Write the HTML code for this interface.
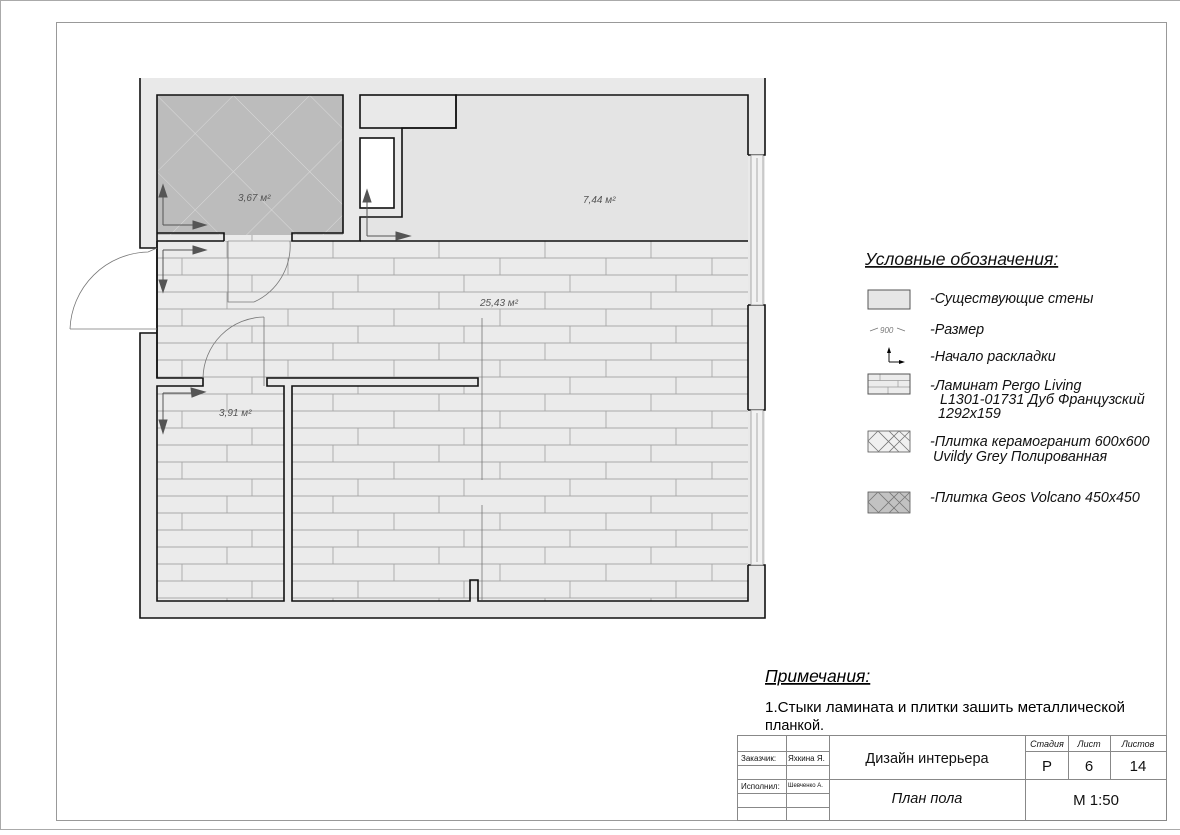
<!DOCTYPE html>
<html><head><meta charset="utf-8"><style>
html,body{margin:0;padding:0;background:#fff;}
svg{display:block;}
text{font-family:"Liberation Sans","DejaVu Sans",sans-serif;}
</style></head><body>
<svg width="1180" height="835" viewBox="0 0 1180 835" xmlns="http://www.w3.org/2000/svg">
<defs>
<pattern id="lam" x="157" y="241" width="318" height="51" patternUnits="userSpaceOnUse">
<rect width="318" height="51" fill="#ebebeb"/>
<g stroke="#a8a8a8" stroke-width="0.9" fill="none">
<line x1="0" y1="17" x2="318" y2="17"/><line x1="0" y1="34" x2="318" y2="34"/><line x1="0" y1="51" x2="318" y2="51"/><line x1="0" y1="0" x2="318" y2="0"/>
<line x1="70" y1="0" x2="70" y2="17"/><line x1="176" y1="0" x2="176" y2="17"/><line x1="282" y1="0" x2="282" y2="17"/>
<line x1="25" y1="17" x2="25" y2="34"/><line x1="131" y1="17" x2="131" y2="34"/><line x1="237" y1="17" x2="237" y2="34"/>
<line x1="95" y1="34" x2="95" y2="51"/><line x1="201" y1="34" x2="201" y2="51"/><line x1="307" y1="34" x2="307" y2="51"/>
</g></pattern>
<pattern id="tile" x="157" y="95" width="54" height="54" patternUnits="userSpaceOnUse" patternTransform="rotate(45 157 95)">
<rect width="54" height="54" fill="#bcbcbc"/>
<path d="M0 0H54M0 0V54" stroke="#dadada" stroke-width="1"/>
</pattern>
<pattern id="lamS" x="868" y="374" width="42" height="20" patternUnits="userSpaceOnUse">
<rect width="42" height="20" fill="#ececec"/>
<g stroke="#999" stroke-width="0.7"><line x1="0" y1="6.5" x2="42" y2="6.5"/><line x1="0" y1="13" x2="42" y2="13"/>
<line x1="12" y1="0" x2="12" y2="6.5"/><line x1="30" y1="6.5" x2="30" y2="13"/><line x1="20" y1="13" x2="20" y2="20"/></g>
</pattern>
</defs>
<rect x="0.5" y="0.5" width="1185" height="829" fill="none" stroke="#aaa"/>
<rect x="56.5" y="22.5" width="1110" height="798" fill="none" stroke="#999"/>

<rect x="140" y="78" width="625" height="540" fill="#e9e9e9"/>
<rect x="139" y="248" width="17" height="84" fill="#fff"/>
<g stroke="#111" stroke-width="1.6" fill="none">
<polyline points="140,78 140,248 157,248"/>
<polyline points="157,333 140,333 140,618 765,618 765,565 748,565"/>
<polyline points="748,410 765,410 765,305 748,305"/>
<polyline points="748,155 765,155 765,78"/>
</g>
<g stroke="#999" stroke-width="0.8" fill="#f2f2f2">
<rect x="751" y="155" width="12" height="150"/><rect x="751" y="410" width="12" height="155"/>
<line x1="757" y1="158" x2="757" y2="302"/><line x1="757" y1="413" x2="757" y2="562"/>
</g>

<rect x="157" y="241" width="591" height="137" fill="url(#lam)"/>
<rect x="228" y="233" width="64" height="9" fill="url(#lam)"/>
<rect x="157" y="386" width="127" height="215" fill="url(#lam)"/>
<rect x="292" y="386" width="456" height="215" fill="url(#lam)"/>
<rect x="203" y="377" width="64" height="10" fill="url(#lam)"/>
<rect x="478" y="377" width="270" height="10" fill="url(#lam)"/>
<rect x="284" y="386" width="8" height="215" fill="#e9e9e9"/>
<rect x="157" y="95" width="186" height="140" fill="url(#tile)"/>
<path d="M456 95H748V241H360V217H402V128H456Z" fill="#e4e4e4"/>
<rect x="360" y="95" width="96" height="33" fill="#e9e9e9"/>
<rect x="360" y="138" width="34" height="70" fill="#fff"/>

<g stroke="#111" stroke-width="1.6" fill="none">
<polyline points="157,248 157,95 343,95 343,233 292,233 292,241 360,241 360,217 402,217 402,128 456,128 456,95 748,95 748,155"/>
<polyline points="224,241 224,233 157,233"/>
<rect x="360" y="95" width="96" height="33"/>
<rect x="360" y="138" width="34" height="70"/>
<line x1="157" y1="241" x2="224" y2="241"/>
<polyline points="157,241 157,378 203,378 203,386 157,386 157,601 284,601 284,386 267,386 267,378 478,378 478,386 292,386 292,601 470,601 470,580 478,580 478,601 748,601 748,565"/>
<line x1="748" y1="305" x2="748" y2="410"/>
<line x1="157" y1="248" x2="157" y2="378"/>
</g>
<line x1="360" y1="241" x2="748" y2="241" stroke="#111" stroke-width="1.4"/>
<g stroke="#777" stroke-width="0.8" fill="none">
<line x1="482" y1="318" x2="482" y2="480"/><line x1="482" y1="505" x2="482" y2="600"/>
<path d="M228 241V302H254"/>
<path d="M254 302A62 62 0 0 0 290 241"/>
<path d="M264 386V317"/>
<path d="M264 317A62 62 0 0 0 203 378"/>
<path d="M70 329H157"/>
<path d="M70 329A80 80 0 0 1 148 252L157 248"/>
</g>
<g stroke="#555" stroke-width="1" fill="#555">
<path d="M163 225V195M163 225H195" fill="none"/><path d="M159 197L163 185L167 197Z"/><path d="M193 221L206 225L193 229Z"/>
<path d="M367 236V200M367 236H398" fill="none"/><path d="M363 202L367 190L371 202Z"/><path d="M396 232L410 236L396 240Z"/>
<path d="M163 250H195M163 250V280" fill="none"/><path d="M193 246L206 250L193 254Z"/><path d="M159 280L163 292L167 280Z"/>
<path d="M163 393H195M163 393V420" fill="none"/><path d="M191 388L205 392L192 397Z"/><path d="M159 420L163 433L167 420Z"/>
</g>
<g fill="#555" font-size="10">
<text x="238" y="201" font-style="italic">3,67 м²</text>
<text x="583" y="203" font-style="italic">7,44 м²</text>
<text x="480" y="306" font-style="italic">25,43 м²</text>
<text x="219" y="416" font-style="italic">3,91 м²</text>
</g>

<g font-style="italic" fill="#111">
<text x="865" y="265" font-size="17.5" text-decoration="underline">Условные обозначения:</text>
<text x="930" y="303" font-size="14.3">-Существующие стены</text>
<text x="930" y="334" font-size="14.3">-Размер</text>
<text x="930" y="361" font-size="14.3">-Начало раскладки</text>
<text x="930" y="390" font-size="14.3">-Ламинат Pergo Living</text>
<text x="940" y="404" font-size="14.3">L1301-01731 Дуб Французский</text>
<text x="938" y="418" font-size="14.3">1292x159</text>
<text x="930" y="446" font-size="14.3">-Плитка керамогранит 600x600</text>
<text x="933" y="461" font-size="14.3">Uvildy Grey Полированная</text>
<text x="930" y="502" font-size="14.3">-Плитка Geos Volcano 450x450</text>
<text x="880" y="333" font-size="8" fill="#777">900</text>
</g>
<rect x="868" y="290" width="42" height="19" fill="#e6e6e6" stroke="#555"/>
<path d="M870 331L878 328M897 328L905 331" stroke="#777" stroke-width="0.8"/>
<path d="M889 362V352M889 362H900" stroke="#111" fill="none"/><path d="M887 353L889 347L891 353Z"/><path d="M899 360L905 362L899 364Z"/>
<rect x="868" y="374" width="42" height="20" fill="url(#lamS)" stroke="#555"/>
<g stroke="#777" stroke-width="0.8" fill="none">
<rect x="868" y="431" width="42" height="21" fill="#f0f0f0" stroke="#555"/>
<path d="M868 441L878 431L899 452M878 452L899 431L910 441M868 441L879 452M889 452L910 431M889 431L910 452"/>
<rect x="868" y="492" width="42" height="21" fill="#c2c2c2" stroke="#555"/>
<path d="M868 502L878 492L899 513M878 513L899 492L910 502M868 502L879 513M889 513L910 492M889 492L910 513"/>
</g>

<text x="765" y="682" font-size="17.5" font-style="italic" text-decoration="underline">Примечания:</text>
<text x="765" y="712" font-size="14.5" textLength="360" lengthAdjust="spacingAndGlyphs">1.Стыки ламината и плитки зашить металлической</text>
<text x="765" y="730" font-size="14.5">планкой.</text>

<g stroke="#888" stroke-width="1" fill="none">
<rect x="737.5" y="735.5" width="429" height="85"/>
<line x1="786.5" y1="735" x2="786.5" y2="820"/>
<line x1="829.5" y1="735" x2="829.5" y2="820"/>
<line x1="1025.5" y1="735" x2="1025.5" y2="820"/>
<line x1="1068.5" y1="735" x2="1068.5" y2="779"/>
<line x1="1110.5" y1="735" x2="1110.5" y2="779"/>
<line x1="737" y1="751.5" x2="829" y2="751.5"/>
<line x1="737" y1="765.5" x2="829" y2="765.5"/>
<line x1="737" y1="779.5" x2="1166" y2="779.5"/>
<line x1="737" y1="793.5" x2="829" y2="793.5"/>
<line x1="737" y1="807.5" x2="829" y2="807.5"/>
<line x1="1025" y1="751.5" x2="1166" y2="751.5"/>
</g>
<g fill="#111">
<text x="741" y="761" font-size="8">Заказчик:</text>
<text x="788" y="761" font-size="8">Яхкина Я.</text>
<text x="741" y="789" font-size="8">Исполнил:</text>
<text x="788" y="787" font-size="6">Шевченко А.</text>
<text x="927" y="763" font-size="14.5" text-anchor="middle">Дизайн интерьера</text>
<text x="927" y="803" font-size="14.5" text-anchor="middle" font-style="italic">План пола</text>
<text x="1047" y="747" font-size="9" text-anchor="middle" font-style="italic">Стадия</text>
<text x="1089" y="747" font-size="9" text-anchor="middle" font-style="italic">Лист</text>
<text x="1138" y="747" font-size="9" text-anchor="middle" font-style="italic">Листов</text>
<text x="1047" y="771" font-size="15" text-anchor="middle">Р</text>
<text x="1089" y="771" font-size="15" text-anchor="middle">6</text>
<text x="1138" y="771" font-size="15" text-anchor="middle">14</text>
<text x="1096" y="805" font-size="15" text-anchor="middle">М 1:50</text>
</g>
</svg>
</body></html>
